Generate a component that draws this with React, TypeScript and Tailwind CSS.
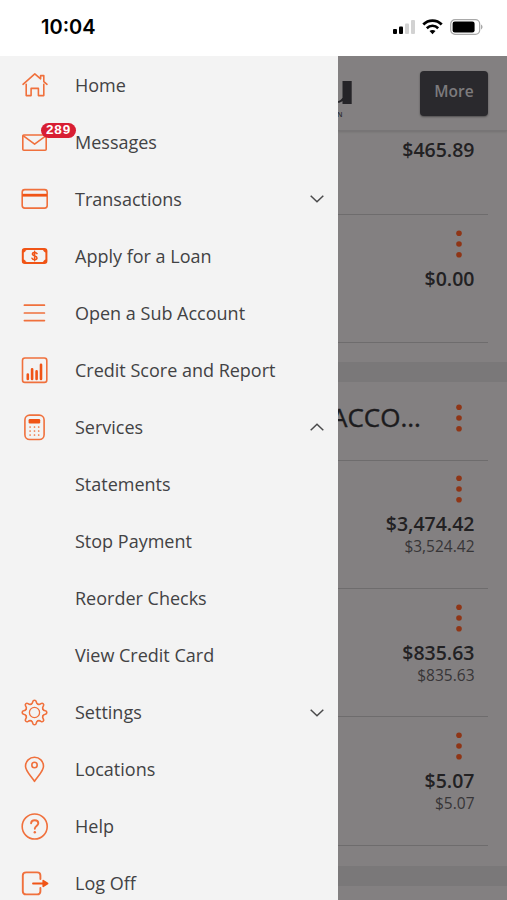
import type { ReactNode } from 'react';
import clsx from 'clsx';

interface IconProps {
  children: ReactNode;
}

function Icon({ children }: IconProps) {
  return (
    <svg
      width="29"
      height="29"
      viewBox="0 0 29 29"
      fill="none"
      stroke="#f0703c"
      strokeWidth="1.6"
      strokeLinecap="round"
      strokeLinejoin="round"
      className="shrink-0"
    >
      {children}
    </svg>
  );
}

const HomeIcon = () => (
  <Icon>
    <path d="M3 13.3 14.8 2.8l5.8 5V4.6h3.2v6l3.2 2.7M6.2 13.2v11.4h4.9v-7.2h7.3v7.2h5.4V13.2" />
  </Icon>
);

const MailIcon = () => (
  <Icon>
    <rect x="2.8" y="7" width="23.4" height="15.2" rx="1" />
    <path d="m3.4 7.8 11.2 8.4 11.2-8.4" />
  </Icon>
);

const CardIcon = () => (
  <Icon>
    <rect x="2.2" y="4.6" width="25" height="18.5" rx="2.6" />
    <path d="M2.4 10.2h24.6" stroke="#f05416" strokeWidth="2.8" strokeLinecap="butt" />
  </Icon>
);

const LoanIcon = () => (
  <Icon>
    <g stroke="#f05416">
      <rect x="2.8" y="7" width="23.6" height="14" rx="2" strokeWidth="2" />
      <path
        d="M3 7.5h3c-.2 1.600-1.200 2.600-3 2.800zM3 20.500h3c-.2-1.600-1.200-2.600-3-2.800zM26.200 7.500h-3c.2 1.600 1.200 2.600 3 2.800zM26.200 20.500h-3c.2-1.600 1.200-2.600 3-2.800z"
        fill="#f05416"
        strokeWidth=".6"
      />
      <path
        d="M17 11.600c-.4-.9-1.200-1.200-2.400-1.200-1.300 0-2.200.6-2.200 1.700 0 2.400 4.600 1.200 4.600 3.800 0 1.100-.9 1.700-2.400 1.700-1.300 0-2.200-.5-2.600-1.400M14.600 9.300v9.400"
        strokeWidth="1.5"
      />
    </g>
  </Icon>
);

const ListIcon = () => (
  <Icon>
    <path d="M4.4 6.2h20M4.4 14h20M4.4 21.600h20" strokeWidth="1.7" />
  </Icon>
);

const ChartIcon = () => (
  <Icon>
    <rect x="2.5" y="2" width="24.3" height="24.4" rx="2.4" />
    <path d="M7.8 18.6v4.4M12.1 13.2V23M16.6 15.4V23M21 8.8V23" stroke="#f05416" strokeWidth="2.6" />
  </Icon>
);

const CalculatorIcon = () => (
  <Icon>
    <rect x="4.9" y="2.1" width="19.2" height="24.4" rx="4.8" />
    <rect x="8.6" y="6" width="11.6" height="4.4" rx="1.2" fill="#f05416" stroke="none" />
    <path d="M10.1 14h.01M14.5 14h.01M18.7 14h.01M10.1 18h.01M14.5 18h.01M18.7 18h.01M10.1 22h.01M14.5 22h.01M18.7 22h.01" strokeWidth="1.7" />
  </Icon>
);

const gearTeeth = [0, 45, 90, 135, 180, 225, 270, 315];

const GearIcon = () => (
  <Icon>
    <circle cx="14.5" cy="14.5" r="5.1" strokeWidth="1.3" />
    {gearTeeth.map((angle) => (
      <path
        key={angle}
        d="M11.1 6.200c1.200-.5 1.500-1.200 1.700-2.500.2-1.100.7-1.500 1.700-1.500s1.500.4 1.700 1.500c.2 1.300.5 2 1.700 2.500"
        transform={`rotate(${angle} 14.5 14.5)`}
      />
    ))}
  </Icon>
);

const PinIcon = () => (
  <Icon>
    <path d="M14.5 26.3C11 20.9 5.5 16 5.5 11.2a9 9 0 0 1 18 0c0 4.8-5.5 9.7-9 15.1z" />
    <circle cx="14.5" cy="10" r="2.7" />
  </Icon>
);

const HelpIcon = () => (
  <Icon>
    <circle cx="14.7" cy="14.5" r="12.5" />
    <path d="M11.1 11.300c.1-2 1.500-3 3.600-3 2.100 0 3.600 1.200 3.600 3 0 2.500-3.500 2.800-3.500 5.400" strokeWidth="1.9" />
    <path d="M14.8 20.2h.01" strokeWidth="2.4" />
  </Icon>
);

const LogOffIcon = () => (
  <Icon>
    <path d="M20.4 10V6.600c0-2.200-1-3.200-3.200-3.200H6.200C3.800 3.400 2.800 4.400 2.800 6.600v15.600c0 2.200 1 3.200 3.400 3.200h11c2.200 0 3.200-1 3.200-3.200V19" strokeWidth="1.9" />
    <path d="M13 14.5h11" stroke="#f05416" strokeWidth="1.8" />
    <path d="m23.2 11.6 4.4 2.9-4.4 2.9z" fill="#f05416" stroke="#f05416" />
  </Icon>
);

interface MenuItem {
  label: string;
  icon?: ReactNode;
  badge?: number;
  chevron?: 'up' | 'down';
}

const menuItems: MenuItem[] = [
  { label: 'Home', icon: <HomeIcon /> },
  { label: 'Messages', icon: <MailIcon />, badge: 289 },
  { label: 'Transactions', icon: <CardIcon />, chevron: 'down' },
  { label: 'Apply for a Loan', icon: <LoanIcon /> },
  { label: 'Open a Sub Account', icon: <ListIcon /> },
  { label: 'Credit Score and Report', icon: <ChartIcon /> },
  { label: 'Services', icon: <CalculatorIcon />, chevron: 'up' },
  { label: 'Statements' },
  { label: 'Stop Payment' },
  { label: 'Reorder Checks' },
  { label: 'View Credit Card' },
  { label: 'Settings', icon: <GearIcon />, chevron: 'down' },
  { label: 'Locations', icon: <PinIcon /> },
  { label: 'Help', icon: <HelpIcon /> },
  { label: 'Log Off', icon: <LogOffIcon /> },
];

function Chevron({ direction }: { direction: 'up' | 'down' }) {
  return (
    <svg width="16" height="10" viewBox="0 0 16 10" fill="none" stroke="#4a4a4b" strokeWidth="1.5" className="shrink-0">
      <path d={direction === 'down' ? 'm1.7 1.8 6.3 6 6.3-6' : 'm1.7 8.2 6.3-6 6.3 6'} />
    </svg>
  );
}

function MenuRow({ label, icon, badge, chevron }: MenuItem) {
  return (
    <li className="flex h-[57.05px] shrink-0 items-center pr-[13px] pl-5">
      <div className="relative mr-[26px] w-[29px] shrink-0">
        {icon}
        {badge && (
          <span className="absolute -top-[5px] left-[21px] flex h-[15.5px] w-[35px] items-center justify-center rounded-full bg-[#d81e33] font-['Liberation_Sans',sans-serif] text-[13.5px] font-bold tracking-[0.8px] text-white">
            {badge}
          </span>
        )}
      </div>
      <span className="flex-1 whitespace-nowrap">{label}</span>
      {chevron && <Chevron direction={chevron} />}
    </li>
  );
}

function StatusBar() {
  return (
    <header className="flex h-14 shrink-0 items-center justify-between bg-white pr-6 pb-0.5 pl-[41px]">
      <span className="font-['Inter',sans-serif] text-[20px] font-semibold text-black">10:04</span>
      <div className="flex items-center">
        <svg width="23" height="16" viewBox="0 0 23 16" className="mr-[7px]">
          <rect x="1" y="10" width="4" height="5" rx="1" fill="#000" />
          <rect x="7" y="7.5" width="4" height="7.5" rx="1" fill="#000" />
          <rect x="13" y="4.5" width="4" height="10.5" rx="1" fill="#d2d2d2" />
          <rect x="19" y="1" width="4" height="14" rx="1" fill="#d2d2d2" />
        </svg>
        <svg width="21" height="16" viewBox="0 0 21 16" fill="none" stroke="#000" className="mr-[7px]">
          <path d="M1.3 5.500c5.200-5.100 13.200-5.100 18.400 0" strokeWidth="2.8" />
          <path d="M4.8 9.200c3.300-3.200 8.100-3.200 11.400 0" strokeWidth="2.6" />
          <path d="M7.5 12.100c1.700-1.600 4.300-1.600 6 0l-3 3.100z" fill="#000" stroke="none" />
        </svg>
        <svg width="33" height="16" viewBox="0 0 33 16">
          <rect x="0.7" y="0.7" width="29" height="14.6" rx="4.3" fill="none" stroke="#a9a9a9" strokeWidth="1.2" />
          <rect x="2.6" y="2.6" width="22" height="10.8" rx="2.2" fill="#000" />
          <path d="M31 5.600v4.800c2-.8 2-4 0-4.800z" fill="#a9a9a9" />
        </svg>
      </div>
    </header>
  );
}

function MoreDots() {
  return (
    <svg width="6" height="28" viewBox="0 0 6 28" fill="#8f3516">
      <circle cx="3" cy="3.2" r="2.8" />
      <circle cx="3" cy="14" r="2.8" />
      <circle cx="3" cy="24.8" r="2.8" />
    </svg>
  );
}

interface AccountRowProps {
  balance: string;
  available?: string;
}

function AccountRow({ balance, available }: AccountRowProps) {
  return (
    <div className="mr-[19px] flex h-[128.3px] shrink-0 flex-col items-end border-b-[1.5px] border-[#6e6c6d] pt-[14.5px] pr-[13.5px]">
      <div className="mr-[12.5px]">
        <MoreDots />
      </div>
      <span className="mt-[8px] text-[19.5px] leading-[25px] font-semibold text-[#222123]">{balance}</span>
      {available && <span className="text-[15.5px] leading-[20px] text-[#373537]">{available}</span>}
    </div>
  );
}

function Accounts() {
  return (
    <main className="flex w-[169px] flex-col overflow-hidden bg-[#838081]">
      <div className="flex h-[75px] shrink-0 items-start justify-between border-b border-[#777576] pt-[15px] pr-[19px] shadow-[0_1px_2px_rgba(0,0,0,0.12)]">
        <div className="flex flex-col pt-[10px]">
          <svg width="15" height="24" viewBox="0 0 15 24" fill="#252428">
            <path d="M4.5 0h9.200v23H4.500zM0 20.200c1.800-.4 3.300-1.600 4.500-3.400v3.200c-1.400 1.200-2.800 1.700-4.500 1.800z" />
          </svg>
          <span className="mt-[6px] -ml-px text-[7px] leading-[8px] font-semibold text-[#2d2c2f]">N</span>
        </div>
        <button className="h-[45px] w-[68px] rounded-[4px] bg-[#2a292d] pb-[3px] text-[15.5px] font-semibold text-[#7d7b7d] shadow-[0_1px_2px_rgba(0,0,0,0.4)]">
          More
        </button>
      </div>
      <div className="mr-[19px] flex h-[84px] shrink-0 justify-end border-b-[1.5px] border-[#6e6c6d] pt-[6px] pr-[13.5px]">
        <span className="text-[19.5px] leading-[26px] font-semibold text-[#222123]">$465.89</span>
      </div>
      <AccountRow balance="$0.00" />
      <div className="mt-[19px] h-5 shrink-0 bg-[#7a7879]" />
      <div className="mr-[19px] flex h-[78.5px] shrink-0 items-center justify-between border-b-[1.5px] border-[#6e6c6d] pr-[26px] pb-[7px]">
        <span className="-ml-[7px] text-[26px] text-[#1c1b1d] [-webkit-text-stroke:0.4px_#1c1b1d]">ACCO...</span>
        <MoreDots />
      </div>
      <AccountRow balance="$3,474.42" available="$3,524.42" />
      <AccountRow balance="$835.63" available="$835.63" />
      <AccountRow balance="$5.07" available="$5.07" />
      <div className="mt-5 h-5 shrink-0 bg-[#7a7879]" />
    </main>
  );
}

export default function App() {
  return (
    <div className={clsx('flex h-[900px] w-[507px] flex-col overflow-hidden', "font-['Open_Sans','Noto_Sans',sans-serif]")}>
      <StatusBar />
      <div className="flex min-h-0 flex-1">
        <nav className="w-[338px] shrink-0 overflow-hidden bg-[#f3f3f3] pt-[0.5px] text-[18px] text-[#424244]">
          <ul className="flex flex-col">
            {menuItems.map((item) => (
              <MenuRow key={item.label} {...item} />
            ))}
          </ul>
        </nav>
        <Accounts />
      </div>
    </div>
  );
}
